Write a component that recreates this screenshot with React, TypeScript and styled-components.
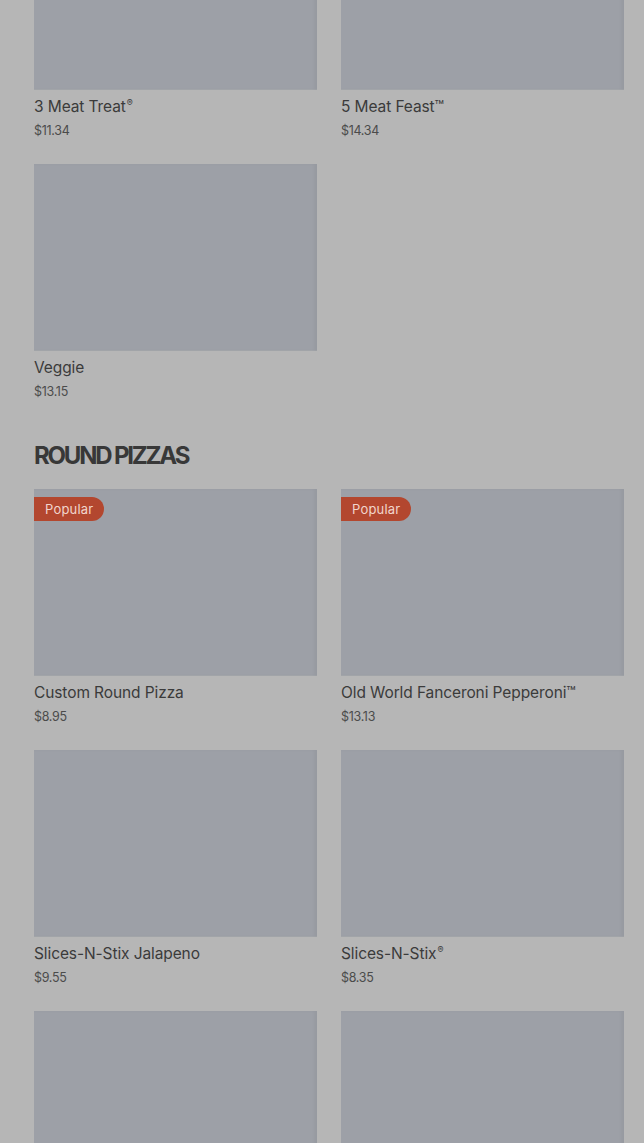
import React from 'react';
import styled, { createGlobalStyle } from 'styled-components';

interface Item {
  name: string;
  price: string;
  popular?: boolean;
}

const GlobalStyle = createGlobalStyle`
  html, body {
    margin: 0;
    padding: 0;
    background: #b6b6b6;
    font-family: Inter, 'Liberation Sans', Arial, sans-serif;
    overflow: hidden;
  }
`;

const Page = styled.div`
  padding: 0 20px 0 34px;
  margin-top: -97px;
`;

const Section = styled.section`
  & + & {
    margin-top: 40px;
  }
`;

const Heading = styled.h2`
  margin: 0 0 18px;
  font-size: 24px;
  line-height: 30px;
  font-weight: 700;
  letter-spacing: -2.2px;
  color: #383838;
`;

const Grid = styled.div`
  display: grid;
  grid-template-columns: 283px 283px;
  column-gap: 24px;
  row-gap: 24px;
`;

const Card = styled.div`
  display: flex;
  flex-direction: column;
`;

const Thumb = styled.div`
  position: relative;
  height: 187px;
  background: #9da0a7;
  box-shadow: inset -3px 0 3px rgba(0, 0, 0, 0.04), inset 0 -1px 0 #a3a6ab;
`;

const Badge = styled.span`
  position: absolute;
  top: 8px;
  left: 0;
  height: 24px;
  padding: 0 11px;
  display: flex;
  align-items: center;
  border-radius: 0 12px 12px 0;
  background: #b3472f;
  color: #f1d5cc;
  font-size: 13px;
  letter-spacing: 0.2px;
`;

const Title = styled.div`
  margin-top: 7px;
  font-size: 15.5px;
  line-height: 20px;
  color: #3b3b3b;
  letter-spacing: -0.1px;
`;

const Mark = styled.sup`
  font-size: 9px;
  line-height: 0;
  vertical-align: 6px;
  margin-left: 1px;
`;

const Price = styled.div`
  margin-top: 5px;
  font-size: 12.5px;
  line-height: 18px;
  color: #4b4b4b;
  letter-spacing: -0.3px;
`;

const specialty: Item[] = [
  { name: '3 Meat Treat®', price: '$11.34' },
  { name: '5 Meat Feast™', price: '$14.34' },
  { name: 'Veggie', price: '$13.15' },
];

const round: Item[] = [
  { name: 'Custom Round Pizza', price: '$8.95', popular: true },
  { name: 'Old World Fanceroni Pepperoni™', price: '$13.13', popular: true },
  { name: 'Slices-N-Stix Jalapeno', price: '$9.55' },
  { name: 'Slices-N-Stix®', price: '$8.35' },
  { name: 'Pepperoni', price: '$10.95' },
  { name: 'Cheese', price: '$9.95' },
];

// the ® sign is set small and raised
function renderName(name: string) {
  if (!name.endsWith('®')) return name;
  return (
    <>
      {name.slice(0, -1)}
      <Mark>®</Mark>
    </>
  );
}

function PizzaCard({ item }: { item: Item }) {
  return (
    <Card>
      <Thumb>{item.popular && <Badge>Popular</Badge>}</Thumb>
      <Title>{renderName(item.name)}</Title>
      <Price>{item.price}</Price>
    </Card>
  );
}

export default function App() {
  return (
    <>
      <GlobalStyle />
      <Page>
        <Section>
          <Grid>
            {specialty.map((p) => (
              <PizzaCard key={p.name} item={p} />
            ))}
          </Grid>
        </Section>
        <Section>
          <Heading>ROUND PIZZAS</Heading>
          <Grid>
            {round.map((p) => (
              <PizzaCard key={p.name} item={p} />
            ))}
          </Grid>
        </Section>
      </Page>
    </>
  );
}
